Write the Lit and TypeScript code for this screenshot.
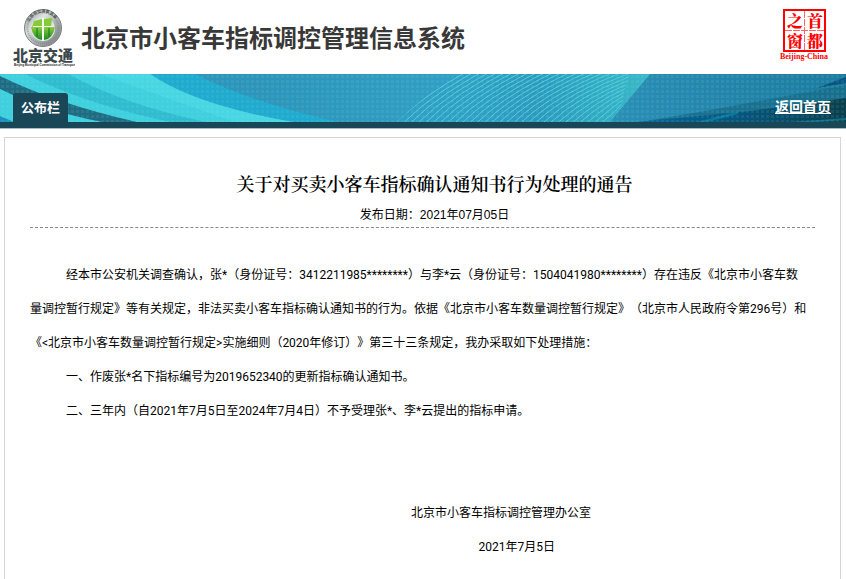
import { LitElement, html, svg, css } from "lit";
import { customElement } from "lit/decorators.js";

@customElement("transport-logo")
class TransportLogo extends LitElement {
  static styles = css`
    :host { display: block; }
    svg { display: block; }
    .name { font: 900 15px "Noto Sans CJK SC", sans-serif; fill: #3d484c; }
    .sub { font: bold 3px "Liberation Sans", sans-serif; fill: #222; }
    .ring { font: bold 4px "Noto Sans CJK SC", sans-serif; fill: #4a4f4f; }
  `;
  render() {
    return html`<svg width="62" height="60" viewBox="0 0 62 60" role="img" aria-label="北京交通">
      <defs>
        <linearGradient id="steel" x1="0" y1="0" x2="1" y2="1">
          <stop offset="0" stop-color="#8d9393" /><stop offset=".35" stop-color="#dfe2e1" />
          <stop offset=".6" stop-color="#a9afae" /><stop offset="1" stop-color="#747b7a" />
        </linearGradient>
        <linearGradient id="leaf" x1="0" y1="0" x2="0" y2="1">
          <stop offset="0" stop-color="#8bcf3c" /><stop offset="1" stop-color="#1c8a22" />
        </linearGradient>
        <path id="arc" d="M15.500 20A14.500 14.500 0 0 1 44.500 20" />
      </defs>
      <circle cx="30" cy="21" r="18.500" fill="url(#steel)" stroke="#7b8281" />
      <circle cx="30" cy="21" r="15.500" fill="none" stroke="#777e7d" stroke-width="2" stroke-dasharray="1 1" opacity=".6" />
      <text class="ring"><textPath href="#arc" startOffset="5">北京市交通委员会</textPath></text>
      <circle cx="30" cy="22" r="12" fill="#dfe3e1" />
      <path d="M21 14L29 12V20H19ZM31 12L39 11L38 20H31Z" fill="#86c93a" />
      <path d="M18 20H29V33Q20 32 18 20ZM31 20H42Q40 32 31 33Z" fill="url(#leaf)" />
      <path d="M24 21V30M36 21V30" stroke="#14751d" stroke-width="1" />
      <path d="M29 11H31V34H29ZM20 19H40V20H20Z" fill="#f3fbef" />
      <text class="name" x="0" y="54">北京交通</text>
      <text class="sub" x="1" y="59">Beijing Municipal Commission of Transport</text>
    </svg>`;
  }
}

@customElement("capital-seal")
class CapitalSeal extends LitElement {
  static styles = css`
    :host { display: block; }
    svg { display: block; }
    .glyph { font: 900 16px "Noto Serif CJK SC", "Noto Sans CJK SC", sans-serif; fill: #f00; }
    .caption { font: bold 8px "Liberation Serif", serif; fill: #f00; text-anchor: middle; }
  `;
  render() {
    return html`<svg width="52" height="54" viewBox="0 0 52 54" role="img" aria-label="首都之窗">
      <rect x="5" y="2" width="41" height="41" fill="#fff" stroke="#f00" stroke-width="2" />
      <path d="M25.500 3V42M6 22.500H45" stroke="#f00" stroke-width="1" stroke-dasharray="7 1" opacity=".6" />
      <text class="glyph" x="8" y="19">之</text>
      <text class="glyph" x="28" y="19">首</text>
      <text class="glyph" x="8" y="39">窗</text>
      <text class="glyph" x="28" y="39">都</text>
      <text class="caption" x="25" y="51">Beijing-China</text>
    </svg>`;
  }
}

@customElement("wave-banner")
class WaveBanner extends LitElement {
  static styles = css`
    :host { display: block; height: 48px; }
    svg { display: block; width: 100%; height: 100%; }
  `;
  render() {
    const lines = Array.from({ length: 30 }, (_, i) => {
      const s = i / 29;
      const x = 397 + 213 * s;
      return svg`<path d="M${x} 48Q${460 + 165 * s} ${-16 + 52 * s} ${650 - 30 * s} ${-78 + 112 * s}" />`;
    });
    return html`<svg viewBox="0 0 846 48" preserveAspectRatio="none" aria-hidden="true">
      <defs>
        <linearGradient id="sea" x1="0" x2="1">
          <stop offset=".3" stop-color="#2c95b9" /><stop offset=".55" stop-color="#319fc4" />
          <stop offset=".8" stop-color="#2689af" /><stop offset="1" stop-color="#1c7b9f" />
        </linearGradient>
        <linearGradient id="deep" x1="0" x2="1">
          <stop offset="0" stop-color="#056699" /><stop offset=".5" stop-color="#06557c" /><stop offset="1" stop-color="#0b3f4c" />
        </linearGradient>
        <linearGradient id="fan" x1="0" x2="1">
          <stop offset=".55" stop-color="#3cc0cc" stop-opacity="0" /><stop offset="1" stop-color="#3cc0cc" stop-opacity=".9" />
        </linearGradient>
        <pattern id="dots" width="5" height="5" patternUnits="userSpaceOnUse">
          <rect x="1" y="1" width="3" height="3" fill="#a8eef5" opacity=".09" />
        </pattern>
        <clipPath id="fanClip"><path d="M397 48Q426 20 457 0H650L610 48Z" /></clipPath>
      </defs>
      <rect width="846" height="48" fill="url(#sea)" />
      <path d="M0 0H195Q250 28 338 48H0Z" fill="#20aace" />
      <path d="M0 0H150Q195 31 293 48H0Z" fill="#3fd0de" />
      <path d="M130 0H150Q195 31 293 48H235Q160 22 100 0Z" fill="#4ddae5" opacity=".6" />
      <path d="M25 0H68Q125 31 206 48H170Q85 30 25 0Z" fill="#2fbccf" />
      <path d="M0 2Q57 30 137 48H102Q45 37 0 15Z" fill="#1f6c82" />
      <path d="M0 42L14 48H0Z" fill="#1c8ec0" />
      <g clip-path="url(#fanClip)">
        <rect x="397" width="253" height="48" fill="url(#fan)" />
        <g fill="none" stroke="#4bd0dc" stroke-width="1">${lines}</g>
      </g>
      <path d="M705 37L846 11V48H640Z" fill="#176b87" opacity=".75" />
      <path d="M636 48L750 37L846 24V48Z" fill="url(#deep)" />
      <path d="M817 14L846 3V9Z" fill="#075481" />
      <path d="M697 48L738 37V40L707 48Z" fill="#0a7899" />
      <path d="M790 48L846 44V46L815 48Z" fill="#116f88" />
      <rect width="846" height="48" fill="url(#dots)" />
    </svg>`;
  }
}

@customElement("app-root")
class AppRoot extends LitElement {
  static styles = css`
    :host {
      display: flex;
      flex-direction: column;
      min-height: 100vh;
      background: #fff;
      color: #000;
      font: 12px/34px Roboto, "Noto Sans CJK SC", sans-serif;
      text-spacing-trim: space-all;
    }
    h1, h2, p { margin: 0; }
    .head {
      display: flex;
      align-items: center;
      gap: 6px;
      height: 74px;
      padding: 0 15px 0 13px;
      box-sizing: border-box;
    }
    .head h1 {
      flex: 1;
      color: #383838;
      font: bold 24px/36px "Noto Sans CJK SC", sans-serif;
    }
    .seal { align-self: flex-start; margin-top: 8px; }
    .banner {
      display: grid;
      border-bottom: 1px solid #a9bcc6;
    }
    .banner > * { grid-area: 1 / 1; }
    .nav {
      z-index: 1;
      display: flex;
      justify-content: space-between;
      align-items: flex-end;
      height: 54px;
      box-sizing: border-box;
      padding: 0 15px 0 13px;
      border-bottom: 6px solid #1a4758;
      font-family: "Noto Sans CJK SC", sans-serif;
      font-weight: bold;
    }
    .nav a { color: #fff; }
    .tab {
      padding: 0 8px 2px;
      border-radius: 3px 3px 0 0;
      background: #1a4758;
      font-size: 13px;
      line-height: 27px;
      text-decoration: none;
    }
    .home { font-size: 14px; line-height: 32px; }
    .panel {
      flex: 1;
      margin: 8px 5px 0 4px;
      padding: 28px 25px 16px;
      border: 1px solid #d5d5d5;
      border-bottom: 0;
    }
    .title {
      text-align: center;
      text-indent: 24px;
      font: 600 18px/34px "Noto Serif CJK SC", "Noto Sans CJK SC", serif;
    }
    .date {
      padding-top: 4px;
      border-bottom: 1px dashed #888;
      text-align: center;
      text-indent: 24px;
      font-family: "Liberation Sans", "Noto Sans CJK SC", sans-serif;
      line-height: 23px;
    }
    .body { padding: 30px 8px 68px 0; }
    .body p { text-indent: 36px; }
    .sign { text-align: center; }
    .office { padding-left: 20%; }
    .day { padding-left: 24%; }
  `;
  render() {
    return html`
      <header class="head">
        <transport-logo></transport-logo>
        <h1>北京市小客车指标调控管理信息系统</h1>
        <capital-seal class="seal"></capital-seal>
      </header>
      <div class="banner">
        <wave-banner></wave-banner>
        <nav class="nav">
          <a class="tab" href="#board">公布栏</a>
          <a class="home" href="#home">返回首页</a>
        </nav>
      </div>
      <main class="panel">
        <h2 class="title">关于对买卖小客车指标确认通知书行为处理的通告</h2>
        <p class="date">发布日期：2021年07月05日</p>
        <div class="body">
          <p>经本市公安机关调查确认，张*（身份证号：3412211985********）与李*云（身份证号：1504041980********）存在违反《北京市小客车数量调控暂行规定》等有关规定，非法买卖小客车指标确认通知书的行为。依据《北京市小客车数量调控暂行规定》（北京市人民政府令第296号）和《&lt;北京市小客车数量调控暂行规定&gt;实施细则（2020年修订）》第三十三条规定，我办采取如下处理措施：</p>
          <p>一、作废张*名下指标编号为2019652340的更新指标确认通知书。</p>
          <p>二、三年内（自2021年7月5日至2024年7月4日）不予受理张*、李*云提出的指标申请。</p>
        </div>
        <div class="sign">
          <p class="office">北京市小客车指标调控管理办公室</p>
          <p class="day">2021年7月5日</p>
        </div>
      </main>
    `;
  }
}
